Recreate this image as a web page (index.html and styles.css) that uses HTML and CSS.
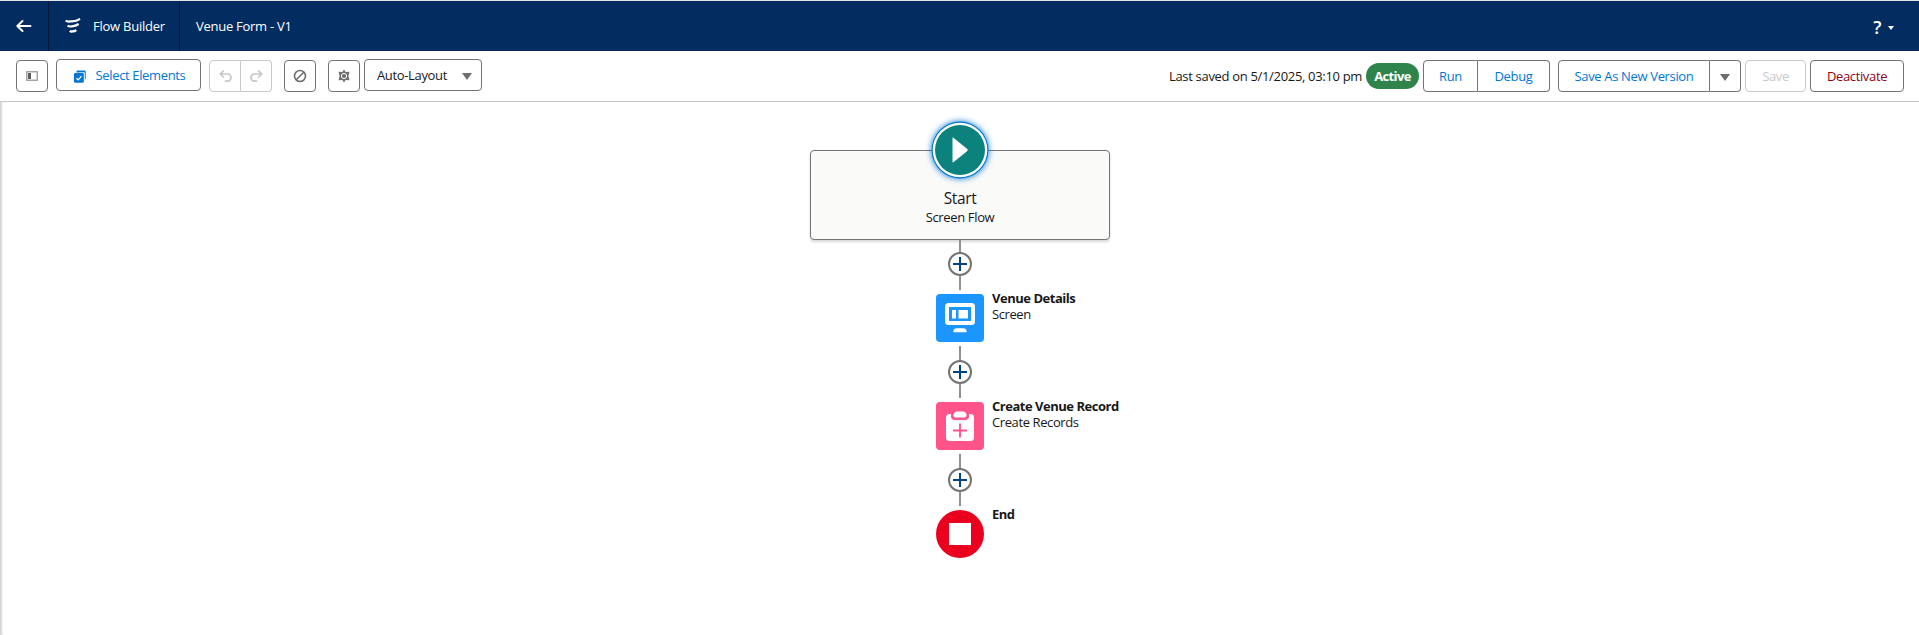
FILE: index.html
```html
<!DOCTYPE html>
<html lang="en">
<head>
<meta charset="utf-8">
<title>Flow Builder</title>
<link rel="stylesheet" href="styles.css">
</head>
<body>
<header class="topbar">
  <a class="back" aria-label="Back"><svg width="16" height="14" viewBox="0 0 16 14" fill="none" stroke="#fff" stroke-width="1.9" stroke-linecap="round" stroke-linejoin="round"><path d="M14.5 7H1.5M6.5 2L1.3 7l5.2 5"/></svg></a>
  <div class="brand">
    <svg width="16" height="16" viewBox="0 0 16 16" fill="none" stroke="#fff" stroke-linecap="butt"><path d="M.6 2.600C3 4.300 4.500 3.300 7 3.300S12.500 2.600 15 .9" stroke-width="2.200"/><path d="M2.600 7.700C5 9.300 6 8.200 8 8.100S11.800 7.300 13.600 6" stroke-width="2.200"/><path d="M4.800 12.900C6.500 14.300 7.300 13.200 8.500 13.300S10.300 12.700 11.200 12" stroke-width="2.400"/></svg>
    <span class="brand-name">Flow Builder</span>
  </div>
  <h1 class="flow-name">Venue Form - V1</h1>
  <div class="help"><span>?</span><i class="caret caret-light"></i></div>
</header>

<div class="toolbar">
  <button class="btn icon-btn toggle"><svg width="12" height="10" viewBox="0 0 12 10"><rect x=".75" y=".75" width="10.500" height="8.500" fill="none" stroke="#9a9a9a" stroke-width="1.300"/><rect x="2" y="2" width="3" height="6" fill="#5c5c5c"/></svg></button>
  <button class="btn select-elements raised"><svg width="12" height="13" viewBox="0 0 12 13"><path d="M2.500 2.500V1.500Q2.500.5 3.500.5H10.500Q11.700.5 11.700 1.700V8.500Q11.700 9.500 10.800 9.500V3.200Q10.800 2.300 10 2.300z" fill="#0176d3"/><rect x="0" y="3" width="9.800" height="9.800" rx="1.300" fill="#0176d3"/><path d="M2.400 8.200l1.800 1.700 3.300-3.700" fill="none" stroke="#fff" stroke-width="1.200"/></svg><span>Select Elements</span></button>
  <div class="group history">
    <button class="btn icon-btn disabled"><svg width="13" height="12" viewBox="0 0 13 12" fill="none" stroke="#c6c6c6" stroke-width="1.700" stroke-linecap="round" stroke-linejoin="round"><path d="M4.300 1L1.200 4l3.100 3M1.400 4H8.500a3.500 3.500 0 0 1 0 7.100H6.500"/></svg></button>
    <button class="btn icon-btn disabled"><svg width="13" height="12" viewBox="0 0 13 12" fill="none" stroke="#c6c6c6" stroke-width="1.700" stroke-linecap="round" stroke-linejoin="round"><path d="M8.700 1l3.100 3-3.100 3M11.600 4H4.500a3.500 3.500 0 0 0 0 7.100H6.500"/></svg></button>
  </div>
  <button class="btn icon-btn ban"><svg width="14" height="14" viewBox="0 0 14 14" fill="none" stroke="#6f6f6f" stroke-width="1.600"><circle cx="7" cy="7" r="5.500"/><path d="M3.200 10.800l7.600-7.600"/></svg></button>
  <button class="btn icon-btn gear"><svg width="12" height="14" viewBox="0 0 12 14"><path d="M6 .4L7.700 2.900 11.500 2.700 10.400 7 11.500 11.300 7.700 11.100 6 13.600 4.300 11.100.5 11.300 1.600 7 .5 2.700 4.300 2.900z" fill="#6f6f6f"/><circle cx="6" cy="7" r="2.600" fill="none" stroke="#fff" stroke-width="1"/><circle cx="6" cy="7" r="1.300" fill="#6f6f6f"/></svg></button>
  <button class="btn layout raised"><span>Auto-Layout</span><i class="caret"></i></button>

  <div class="actions">
    <span class="saved">Last saved on 5/1/2025, 03:10 pm</span>
    <span class="status">Active</span>
    <div class="group run-group">
      <button class="btn run">Run</button>
      <button class="btn debug">Debug</button>
    </div>
    <div class="group save-group">
      <button class="btn save-as">Save As New Version</button>
      <button class="btn icon-btn more"><i class="caret"></i></button>
    </div>
    <button class="btn save disabled">Save</button>
    <button class="btn deactivate">Deactivate</button>
  </div>
</div>

<main class="canvas">
  <section class="start">
    <svg class="play" width="50" height="50" viewBox="0 0 50 50"><path d="M17.500 13.500Q17.500 12 18.700 13L32.300 24Q33.300 25 32.300 26L18.700 37Q17.500 38 17.500 36.500z" fill="#fff"/></svg>
    <h2 class="start-title">Start</h2>
    <p class="start-type">Screen Flow</p>
  </section>

  <div class="link first"><span class="add"><svg width="14" height="14" viewBox="0 0 14 14"><path d="M7 0v14M0 7h14" stroke="#014486" stroke-width="2"/></svg></span></div>

  <div class="node">
    <div class="tile screen"><svg width="30" height="30" viewBox="0 0 30 30"><rect x="0" y="0" width="30" height="22" rx="3.500" fill="#fff"/><rect x="4" y="4" width="22" height="14" fill="#1b96ff"/><rect x="7" y="7" width="4" height="8.500" fill="#fff"/><rect x="13.500" y="7" width="9.500" height="8.500" fill="#fff"/><path d="M8.300 29.300q0-4 3.500-4h6.400q3.500 0 3.500 4z" fill="#fff"/></svg></div>
    <div class="label"><b>Venue Details</b><span>Screen</span></div>
  </div>

  <div class="link"><span class="add"><svg width="14" height="14" viewBox="0 0 14 14"><path d="M7 0v14M0 7h14" stroke="#014486" stroke-width="2"/></svg></span></div>

  <div class="node">
    <div class="tile create"><svg width="28" height="30" viewBox="0 0 28 30"><rect x="0" y="3" width="28" height="27" rx="3.500" fill="#fff"/><path d="M5 3h18v2q0 4-4 4H9q-4 0-4-4z" fill="#ff538a"/><path d="M7.500 4.500Q7.500.5 11.500.5h5q4 0 4 4 0 2-2 2h-9q-2 0-2-2z" fill="#fff"/><path d="M14 12.500v14M7 19.500h14" stroke="#ff538a" stroke-width="1.800"/></svg></div>
    <div class="label"><b>Create Venue Record</b><span>Create Records</span></div>
  </div>

  <div class="link last"><span class="add"><svg width="14" height="14" viewBox="0 0 14 14"><path d="M7 0v14M0 7h14" stroke="#014486" stroke-width="2"/></svg></span></div>

  <div class="node">
    <div class="tile end"><i class="stop"></i></div>
    <div class="label"><b>End</b></div>
  </div>
</main>
</body>
</html>
```
FILE: styles.css
```css
* { box-sizing: border-box; }
html, body { height: 100%; }
body {
  margin: 0;
  display: flex;
  flex-direction: column;
  overflow: hidden;
  background: #fff;
  color: #181818;
  font: 13px/19px "Open Sans", "Noto Sans", sans-serif;
  letter-spacing: -0.35px;
}
h1, h2, p { margin: 0; font-weight: 400; }
svg { display: block; flex: none; }
button { font: inherit; letter-spacing: inherit; margin: 0; }

.topbar {
  flex: none;
  height: 51px;
  display: flex;
  align-items: stretch;
  background: #032d60;
  border-top: 1px solid #e5e5e5;
  color: #fff;
}
.back { width: 49px; padding-left: 16px; display: flex; align-items: center; border-right: 1px solid #001639; }
.brand { width: 131px; padding-left: 16px; display: flex; align-items: center; gap: 12px; border-right: 1px solid #001639; white-space: nowrap; }
.brand-name { letter-spacing: -0.25px; }
.flow-name { padding-left: 16px; font-size: 13px; line-height: 50px; letter-spacing: -0.27px; }
.help { margin-left: auto; padding: 3px 25px 0 0; display: flex; align-items: center; gap: 7px; font-size: 18px; font-weight: 600; }

.caret { width: 0; height: 0; flex: none; border: 5px solid transparent; border-top: 7px solid #706e6b; border-bottom: 0; }
.caret-light { border-width: 4px 3px 0; border-top-color: #fff; }

.toolbar {
  flex: none;
  height: 51px;
  padding: 0 15px 0 16px;
  display: flex;
  align-items: center;
  border-bottom: 1px solid #c9c9c9;
}
.btn {
  height: 32px;
  padding: 0;
  display: flex;
  align-items: center;
  justify-content: center;
  background: #fff;
  border: 1px solid #747474;
  border-radius: 4px;
  color: #0176d3;
  white-space: nowrap;
}
.raised { margin-bottom: 2px; }
.icon-btn { width: 32px; }
.disabled { border-color: #c9c9c9; color: #c9c9c9; }
.group { display: flex; }
.group .btn:first-child { border-radius: 4px 0 0 4px; }
.group .btn:last-child { border-radius: 0 4px 4px 0; border-left: 0; }
.history .btn:last-child { width: 31px; }
.select-elements { width: 145px; margin-left: 8px; padding-left: 2px; gap: 10px; }
.select-elements svg { margin-top: 3px; }
.history { margin-left: 8px; }
.ban { margin-left: 12px; }
.gear { margin-left: 12px; }
.layout { width: 118px; margin-left: 4px; padding: 0 9px 0 12px; justify-content: space-between; color: #181818; }
.layout .caret { margin-top: 2px; }
.actions { margin-left: auto; display: flex; align-items: center; }
.saved { width: 197px; white-space: nowrap; letter-spacing: -0.32px; }
.status { width: 53px; height: 26px; margin-right: 4px; border-radius: 13px; background: #2e844a; color: #fff; font-weight: 700; line-height: 26px; text-align: center; letter-spacing: -0.6px; }
.run { width: 55px; }
.debug { width: 72px; }
.save-group { margin-left: 8px; }
.save-as { width: 152px; }
.save-group .more { width: 31px; }
.save-group .caret { margin-top: 2px; }
.save { width: 61px; margin-left: 4px; }
.deactivate { width: 94px; margin-left: 4px; color: #8e030f; }

.canvas {
  flex: 1;
  display: flex;
  flex-direction: column;
  align-items: center;
  padding: 48px 0 0 1px;
  box-shadow: inset 3px 0 2px -1px #d4d4d4;
}
.start {
  flex: none;
  width: 300px;
  height: 90px;
  display: flex;
  flex-direction: column;
  align-items: center;
  background: #fafaf9;
  border: 1px solid #747474;
  border-radius: 4px;
  box-shadow: 0 2px 3px rgba(0, 0, 0, .16);
}
.play { margin-top: -26px; border-radius: 50%; background: #0b827c; box-shadow: 0 0 0 2.300px #fff, 0 0 0 3.400px #0176d3, 0 0 6px 3.500px #0176d3; }
.start-title { margin-top: 12px; font-size: 15.500px; line-height: 22px; }
.start-type { line-height: 16px; }

.link {
  flex: none;
  width: 24px;
  height: 52px;
  margin: 4px 0;
  padding-top: 14px;
  background: linear-gradient(#919191, #919191) center / 2px 100% no-repeat;
}
.first { height: 50px; margin-top: 0; padding-top: 12px; }
.add { width: 24px; height: 24px; display: flex; align-items: center; justify-content: center; border: 2px solid #747474; border-radius: 50%; background: #fff; }

.node { flex: none; width: 48px; height: 48px; display: flex; gap: 8px; }
.tile { flex: none; width: 48px; height: 48px; display: flex; align-items: center; justify-content: center; border-radius: 4px; }
.screen { background: #1b96ff; }
.create { background: #ff538a; }
.end { background: #ea001e; border-radius: 50%; }
.stop { width: 22px; height: 22px; background: #fff; }
.label { flex: none; margin-top: -4px; display: flex; flex-direction: column; line-height: 16px; white-space: nowrap; letter-spacing: -0.4px; }
.label b { letter-spacing: -0.48px; }
```
